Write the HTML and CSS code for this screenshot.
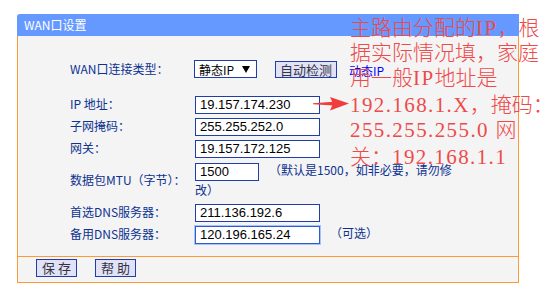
FILE: index.html
```html
<!DOCTYPE html>
<html lang="zh-CN">
<head>
<meta charset="utf-8">
<title>WAN口设置</title>
<link rel="stylesheet" href="styles.css">
</head>
<body>
<div class="panel">
  <div class="panel-head">WAN口设置</div>
  <div class="panel-body">
    <div class="row row-first">
      <div class="label">WAN口连接类型：</div>
      <div class="field field-flex">
        <div class="select"><span class="select-text">静态IP</span><span class="caret"></span></div>
        <button class="btn btn-detect">自动检测</button>
        <span class="link">动态IP</span>
      </div>
    </div>
    <div class="row">
      <div class="label">IP 地址：</div>
      <div class="field"><input class="text" value="19.157.174.230"></div>
    </div>
    <div class="row">
      <div class="label">子网掩码：</div>
      <div class="field"><input class="text" value="255.255.252.0"></div>
    </div>
    <div class="row">
      <div class="label">网关：</div>
      <div class="field"><input class="text" value="19.157.172.125"></div>
    </div>
    <div class="row row-mtu">
      <div class="label">数据包MTU（字节）：</div>
      <div class="field field-wrap"><input class="text text-short" value="1500"><span class="hint">（默认是1500，如非必要，请勿修改）</span></div>
    </div>
    <div class="row">
      <div class="label">首选DNS服务器：</div>
      <div class="field"><input class="text" value="211.136.192.6"></div>
    </div>
    <div class="row">
      <div class="label">备用DNS服务器：</div>
      <div class="field"><input class="text text-focus" value="120.196.165.24"><span class="hint">（可选）</span></div>
    </div>
  </div>
  <div class="panel-foot">
    <button class="btn btn-foot">保 存</button>
    <button class="btn btn-foot">帮 助</button>
  </div>
</div>

<svg class="arrow" width="36" height="16" viewBox="0 0 36 16">
  <polygon points="0,7.2 20,5.8 20,9.6 0,8.2" fill="#f03c3c"/>
  <polygon points="17,1 36,7.6 17,14.5 20,7.6" fill="#f03c3c"/>
</svg>

<div class="note">
  <div class="note-line">主路由分配的<span class="lat">IP</span>，根</div>
  <div class="note-line">据实际情况填，家庭</div>
  <div class="note-line">用一般<span class="lat">IP</span>地址是</div>
  <div class="note-line note-gap"><span class="lat">192.168.1.X</span>，掩码：</div>
  <div class="note-line"><span class="lat">255.255.255.0&nbsp;</span>网</div>
  <div class="note-line note-gap">关：<span class="lat">192.168.1.1</span></div>
</div>
</body>
</html>
```

FILE: styles.css
```css
* {
  box-sizing: border-box;
}

html,
body {
  margin: 0;
  padding: 0;
  background: #ffffff;
  overflow: hidden;
}

body {
  position: relative;
  width: 557px;
  height: 308px;
  font-family: "Noto Sans CJK SC", sans-serif;
}

.panel {
  margin: 14px 0 0 17px;
  width: 502px;
}

.panel-head {
  height: 22px;
  line-height: 22px;
  padding-left: 7px;
  background: #6699ff;
  color: #ffffff;
  font-size: 12px;
  border-radius: 3px 0 0 0;
}

.panel-body {
  background: #f4f4f4;
  border: 1px solid #ff9933;
  border-top: 0;
  padding: 22px 0 11px 52px;
}

.row {
  display: flex;
  align-items: center;
  min-height: 22px;
}

.row-first {
  margin-bottom: 13px;
}

.row-mtu {
  min-height: 40px;
}

.label {
  flex: none;
  width: 125px;
  color: #0d3290;
  font-size: 12px;
  line-height: 16px;
}

.field {
  font-size: 12px;
  line-height: 17px;
  color: #0d3290;
}

.field-flex {
  display: flex;
  align-items: center;
  margin-left: -1px;
}

.field-wrap {
  width: 262px;
  padding: 2px 0 3px;
}

.text {
  width: 125px;
  height: 18px;
  padding: 0 4px;
  margin: 0;
  border: 1px solid #1e3fa6;
  background: #ffffff;
  color: #000000;
  font-family: "Liberation Sans", sans-serif;
  font-size: 13px;
  vertical-align: middle;
  outline: none;
}

.text-short {
  width: 64px;
}

.text-focus {
  border-color: #2b5bd6;
  box-shadow: 0 0 0 1px #a9c3f5;
}

.hint {
  margin-left: 10px;
  color: #0d3290;
}

.select {
  width: 63px;
  height: 18px;
  border: 1px solid #1e3fa6;
  background: #ffffff;
  display: flex;
  align-items: center;
  justify-content: space-between;
  padding: 0 6px 0 4px;
  font-size: 12px;
  color: #000000;
}

.caret {
  width: 0;
  height: 0;
  border-left: 4px solid transparent;
  border-right: 4px solid transparent;
  border-top: 7px solid #000000;
}

.btn {
  margin: 0;
  padding: 0;
  height: 17px;
  border: 1px solid #1f3fa8;
  background: #e2e2f7;
  color: #333344;
  font-family: "Noto Sans CJK SC", sans-serif;
  font-size: 13px;
  line-height: 15px;
}

.btn-detect {
  width: 62px;
  margin-left: 18px;
}

.link {
  margin-left: 12px;
  color: #0000ff;
  font-size: 12px;
  line-height: 14px;
  padding-top: 3px;
}

.panel-foot {
  height: 26px;
  background: #f4f4f4;
  border: 1px solid #ff9933;
  border-top: 0;
  padding: 2px 0 0 18px;
  display: flex;
  align-items: flex-start;
  gap: 18px;
}

.btn-foot {
  width: 41px;
  height: 18px;
}

.arrow {
  position: absolute;
  left: 313px;
  top: 96px;
}

.note {
  position: absolute;
  left: 350px;
  top: 14px;
  color: #ef4a4a;
  font-size: 21px;
  font-weight: 300;
  white-space: nowrap;
}

.note-line {
  height: 25px;
  line-height: 25px;
}

.note-gap {
  margin-top: 2px;
}

.lat {
  font-family: "Liberation Serif", serif;
  font-weight: 400;
  line-height: 10px;
  letter-spacing: 1.4px;
}
```
